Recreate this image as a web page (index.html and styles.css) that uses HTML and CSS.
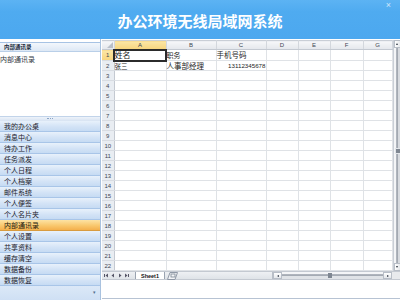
FILE: index.html
```html
<!DOCTYPE html>
<html lang="zh-CN">
<head>
<meta charset="utf-8">
<title>办公环境无线局域网系统</title>
<link rel="stylesheet" href="styles.css">
</head>
<body>
<div class="app">
  <header class="top">
    <h1 class="title">办公环境无线局域网系统</h1>
    <span class="close">×</span>
  </header>
  <div class="main">
    <aside class="side">
      <div class="panel-title">内部通讯录</div>
      <div class="panel-body"><div class="entry">内部通讯录</div></div>
      <div class="splitter"><span class="grip"></span></div>
      <ul class="menu">
        <li>我的办公桌</li>
        <li>消息中心</li>
        <li>待办工作</li>
        <li>任务派发</li>
        <li>个人日程</li>
        <li>个人档案</li>
        <li>邮件系统</li>
        <li>个人便签</li>
        <li>个人名片夹</li>
        <li class="active">内部通讯录</li>
        <li>个人设置</li>
        <li>共享资料</li>
        <li>缓存清空</li>
        <li>数据备份</li>
        <li>数据恢复</li>
      </ul>
      <div class="menu-foot"><span class="more">▾</span></div>
    </aside>
    <section class="sheet">
      <div class="grid-wrap">
        <table class="grid">
          <colgroup>
            <col class="c-rh"><col class="c-a"><col class="c-b"><col class="c-c"><col class="c-d"><col class="c-e"><col class="c-f"><col class="c-g">
          </colgroup>
          <thead>
            <tr class="hrow">
              <th class="corner"><span class="tri"></span></th>
              <th class="sel">A</th><th>B</th><th>C</th><th>D</th><th>E</th><th>F</th><th>G</th>
            </tr>
          </thead>
          <tbody>
            <tr class="r1"><th class="sel">1</th><td class="cur big">姓名</td><td class="t7">职务</td><td class="t75">手机号码</td><td></td><td></td><td></td><td></td></tr>
            <tr><th>2</th><td class="t65">张三</td><td class="t75">人事部经理</td><td class="num">13112345678</td><td></td><td></td><td></td><td></td></tr>
            <tr><th>3</th><td></td><td></td><td></td><td></td><td></td><td></td><td></td></tr>
            <tr><th>4</th><td></td><td></td><td></td><td></td><td></td><td></td><td></td></tr>
            <tr><th>5</th><td></td><td></td><td></td><td></td><td></td><td></td><td></td></tr>
            <tr><th>6</th><td></td><td></td><td></td><td></td><td></td><td></td><td></td></tr>
            <tr><th>7</th><td></td><td></td><td></td><td></td><td></td><td></td><td></td></tr>
            <tr><th>8</th><td></td><td></td><td></td><td></td><td></td><td></td><td></td></tr>
            <tr><th>9</th><td></td><td></td><td></td><td></td><td></td><td></td><td></td></tr>
            <tr><th>10</th><td></td><td></td><td></td><td></td><td></td><td></td><td></td></tr>
            <tr><th>11</th><td></td><td></td><td></td><td></td><td></td><td></td><td></td></tr>
            <tr><th>12</th><td></td><td></td><td></td><td></td><td></td><td></td><td></td></tr>
            <tr><th>13</th><td></td><td></td><td></td><td></td><td></td><td></td><td></td></tr>
            <tr><th>14</th><td></td><td></td><td></td><td></td><td></td><td></td><td></td></tr>
            <tr><th>15</th><td></td><td></td><td></td><td></td><td></td><td></td><td></td></tr>
            <tr><th>16</th><td></td><td></td><td></td><td></td><td></td><td></td><td></td></tr>
            <tr><th>17</th><td></td><td></td><td></td><td></td><td></td><td></td><td></td></tr>
            <tr><th>18</th><td></td><td></td><td></td><td></td><td></td><td></td><td></td></tr>
            <tr><th>19</th><td></td><td></td><td></td><td></td><td></td><td></td><td></td></tr>
            <tr><th>20</th><td></td><td></td><td></td><td></td><td></td><td></td><td></td></tr>
            <tr><th>21</th><td></td><td></td><td></td><td></td><td></td><td></td><td></td></tr>
            <tr><th>22</th><td></td><td></td><td></td><td></td><td></td><td></td><td></td></tr>
          </tbody>
        </table>
        <div class="vscroll">
          <span class="vbtn up"><span class="tri-up"></span></span>
          <span class="vtrack"><span class="vthumb"></span></span>
          <span class="vbtn down"><span class="tri-down"></span></span>
        </div>
      </div>
      <div class="tabbar">
        <div class="nav">
          <svg width="30" height="9" viewBox="0 0 30 9">
            <rect x="2" y="3" width="1" height="3" fill="#556"/>
            <path d="M6 2.5 L3.5 4.5 L6 6.5 Z" fill="#556"/>
            <path d="M12 2.5 L9.5 4.5 L12 6.5 Z" fill="#556"/>
            <path d="M17 2.5 L19.5 4.5 L17 6.5 Z" fill="#556"/>
            <path d="M23 2.5 L25.5 4.5 L23 6.5 Z" fill="#556"/>
            <rect x="26" y="3" width="1" height="3" fill="#556"/>
          </svg>
        </div>
        <div class="tab">Sheet1</div>
        <div class="newtab">
          <svg width="11" height="9" viewBox="0 0 11 9">
            <path d="M0.5 8.5 L3 1.5 L10.5 1.5 L8 8.5 Z" fill="#f4f5f7" stroke="#8f98a6" stroke-width="1"/>
            <rect x="4" y="3" width="4" height="3" fill="none" stroke="#7b8594" stroke-width="0.8"/>
          </svg>
        </div>
        <div class="tabfill"></div>
        <div class="hscroll">
          <span class="hbtn"><span class="tri-left"></span></span>
          <span class="htrack"><span class="hthumb"></span></span>
          <span class="hbtn"><span class="tri-right"></span></span>
        </div>
        <div class="sc-corner"></div>
      </div>
      <div class="sheet-foot"></div>
    </section>
  </div>
</div>
</body>
</html>
```

FILE: styles.css
```css
html, body {
  margin: 0;
  padding: 0;
  width: 400px;
  height: 300px;
  overflow: hidden;
  background: #ffffff;
  font-family: "Noto Sans CJK SC", "Liberation Sans", sans-serif;
}

.app {
  display: flex;
  flex-direction: column;
  width: 400px;
  height: 300px;
}

/* header */
.top {
  position: relative;
  height: 39px;
  flex: none;
  display: flex;
  align-items: center;
  justify-content: center;
  background: linear-gradient(#5cb3f3, #4fabf0 30%, #4ca8ef);
}
.title {
  margin: 0;
  font-size: 15px;
  line-height: 15px;
  font-weight: bold;
  color: #ffffff;
  padding-top: 2px;
}
.close {
  position: absolute;
  right: 9px;
  top: 1px;
  font-size: 9px;
  line-height: 9px;
  color: #cfe6fb;
  font-family: "Liberation Sans", sans-serif;
}

.main {
  flex: 1;
  display: flex;
  min-height: 0;
}

/* left side */
.side {
  width: 100px;
  flex: none;
  display: flex;
  flex-direction: column;
  border-right: 1px solid #a9c2df;
  background: #ffffff;
}
.panel-title {
  margin-top: 3px;
  height: 8px;
  border-top: 1px solid #a7c3e4;
  border-bottom: 1px solid #b9cfe8;
  background: linear-gradient(#f3f7fc, #dde8f5);
  font-size: 5.5px;
  line-height: 8px;
  font-weight: bold;
  color: #1b2a3a;
  padding-left: 4px;
}
.panel-body {
  height: 64px;
  background: #ffffff;
}
.entry {
  margin-top: 3px;
  font-size: 7px;
  line-height: 8px;
  color: #333a44;
}
.splitter {
  height: 4px;
  background: linear-gradient(#eef3fa, #d7e3f2);
  border-top: 1px solid #c2d4ea;
  display: flex;
  justify-content: center;
  align-items: center;
}
.grip {
  width: 6px;
  height: 1px;
  border-top: 1px dotted #8aa5c7;
}
.menu {
  list-style: none;
  margin: 0;
  padding: 0;
}
.menu li {
  height: 10px;
  border-bottom: 1px solid #a8c5e8;
  background: linear-gradient(#e8f1fb, #d3e3f6 55%, #c6dbf3);
  font-size: 7px;
  line-height: 10px;
  color: #1c222b;
  padding-left: 4px;
}
.menu li.active {
  background: linear-gradient(#fde3a4, #f9c86e 55%, #f4b04c);
  border-bottom-color: #d89b3f;
  color: #231a0e;
}
.menu-foot {
  flex: 1;
  background: linear-gradient(#dbe8f7, #cfe0f4);
  display: flex;
  justify-content: flex-end;
  align-items: flex-end;
}
.more {
  font-size: 5px;
  line-height: 5px;
  color: #54708f;
  margin: 0 4px 6px 0;
}

/* sheet */
.sheet {
  flex: 1;
  display: flex;
  flex-direction: column;
  padding: 1px 0 0 1px;
  min-width: 0;
}
.grid-wrap {
  display: flex;
  height: 231px;
  flex: none;
}
.grid {
  table-layout: fixed;
  border-collapse: collapse;
  width: 290px;
  flex: none;
  border-top: 1px solid #c9ced6;
}
.c-rh { width: 12px; }
.c-a { width: 52px; }
.c-b { width: 50px; }
.c-c { width: 50px; }
.c-d { width: 32px; }
.c-e { width: 32px; }
.c-f { width: 33px; }
.c-g { width: 29px; }

.grid th, .grid td {
  padding: 0;
  overflow: visible;
  white-space: nowrap;
}
.grid tr { height: 10px; }
.grid tr.hrow { height: 9px; }
.grid tr.r1 { height: 11px; }

.hrow th {
  background: linear-gradient(#f6f7f9, #e4e7ec);
  border-right: 1px solid #d3d7dd;
  border-bottom: 1px solid #c4c9d1;
  font-family: "Liberation Sans", sans-serif;
  font-size: 6px;
  line-height: 8px;
  font-weight: normal;
  color: #3b4552;
  text-align: center;
}
.hrow th.sel {
  background: linear-gradient(#fbe6a6, #f7d47c);
  border-bottom-color: #d7ad56;
}
.corner {
  position: relative;
}
.tri {
  position: absolute;
  right: 1px;
  bottom: 1px;
  width: 0;
  height: 0;
  border-left: 6px solid transparent;
  border-bottom: 6px solid #b9bfc8;
}
tbody th {
  background: #e9edf2;
  border-right: 1px solid #c4c9d1;
  border-bottom: 1px solid #d8dce2;
  font-family: "Liberation Sans", sans-serif;
  font-size: 6px;
  line-height: 8px;
  font-weight: normal;
  color: #3d4754;
  text-align: center;
}
tbody th.sel {
  background: linear-gradient(#fbe6a6, #f7d47c);
}
tbody td {
  border-right: 1px solid #dfe2e6;
  border-bottom: 1px solid #dfe2e6;
  color: #1d1d1d;
  padding-left: 1px;
  line-height: 8px;
  vertical-align: middle;
}
td.cur {
  outline: 2px solid #2b2b2b;
  outline-offset: -1px;
}
td.big { font-size: 8px; }
td.t7 { font-size: 7px; }
td.t75 { font-size: 7.5px; }
td.t65 { font-size: 6.5px; }
td.num {
  font-family: "Liberation Sans", sans-serif;
  font-size: 6.2px;
  text-align: right;
  padding-right: 0;
}

.vscroll {
  width: 7px;
  flex: none;
  display: flex;
  flex-direction: column;
  background: #eceef1;
  border-left: 1px solid #c9ced6;
}
.vbtn {
  height: 8px;
  flex: none;
  background: linear-gradient(to right, #ffffff, #e7e9ec);
  border: 1px solid #b8bec7;
  box-sizing: border-box;
  display: flex;
  align-items: center;
  justify-content: center;
}
.tri-up {
  width: 0; height: 0;
  border-left: 1.5px solid transparent;
  border-right: 1.5px solid transparent;
  border-bottom: 2px solid #2d3440;
}
.tri-down {
  width: 0; height: 0;
  border-left: 1.5px solid transparent;
  border-right: 1.5px solid transparent;
  border-top: 2px solid #2d3440;
}
.vtrack {
  flex: 1;
  position: relative;
  background: linear-gradient(to right, #f4f5f7 0, #f4f5f7 25%, #b9bec6 26%, #9aa0a9 60%, #d7dadf 61%);
}
.vthumb {
  position: absolute;
  left: 1px;
  right: 0;
  top: 100px;
  height: 4px;
  background: #7f8792;
  border: 1px solid #e3e6ea;
}

.tabbar {
  height: 9px;
  flex: none;
  display: flex;
  align-items: stretch;
  background: linear-gradient(#eef0f3, #dfe3e8);
  border-top: 1px solid #c4c9d1;
  border-bottom: 1px solid #c4c9d1;
  box-sizing: border-box;
}
.nav {
  width: 33px;
  flex: none;
  display: flex;
  align-items: center;
}
.tab {
  width: 28px;
  flex: none;
  background: #ffffff;
  font-family: "Liberation Sans", sans-serif;
  font-size: 5.5px;
  line-height: 8px;
  font-weight: bold;
  color: #111;
  text-align: center;
  border-left: 1px solid #9aa3b0;
  border-right: 1px solid #9aa3b0;
}
.newtab {
  width: 12px;
  flex: none;
  display: flex;
  align-items: center;
  padding-left: 2px;
}
.tabfill {
  flex: 1;
}
.hscroll {
  width: 119px;
  flex: none;
  display: flex;
  background: #e8eaed;
  border-left: 1px solid #b8bec7;
}
.hbtn {
  width: 9px;
  flex: none;
  display: flex;
  align-items: center;
  justify-content: center;
  background: linear-gradient(#ffffff, #e4e7eb);
  border: 1px solid #b8bec7;
  box-sizing: border-box;
}
.tri-left {
  width: 0; height: 0;
  border-top: 1.5px solid transparent;
  border-bottom: 1.5px solid transparent;
  border-right: 2px solid #2d3440;
}
.tri-right {
  width: 0; height: 0;
  border-top: 1.5px solid transparent;
  border-bottom: 1.5px solid transparent;
  border-left: 2px solid #2d3440;
}
.htrack {
  flex: 1;
  position: relative;
  background: linear-gradient(#f4f5f7 0, #f4f5f7 30%, #b3b8c0 31%, #9ea4ad 60%, #e0e3e7 61%);
}
.hthumb {
  position: absolute;
  top: 1px;
  bottom: 1px;
  left: 46px;
  width: 4px;
  background: #7f8792;
}
.sc-corner {
  width: 8px;
  flex: none;
  background: #e8eaed;
}
.sheet-foot {
  height: 18px;
  flex: none;
  background: #ffffff;
  border-bottom: 1px solid #b7c3d3;
}
```
